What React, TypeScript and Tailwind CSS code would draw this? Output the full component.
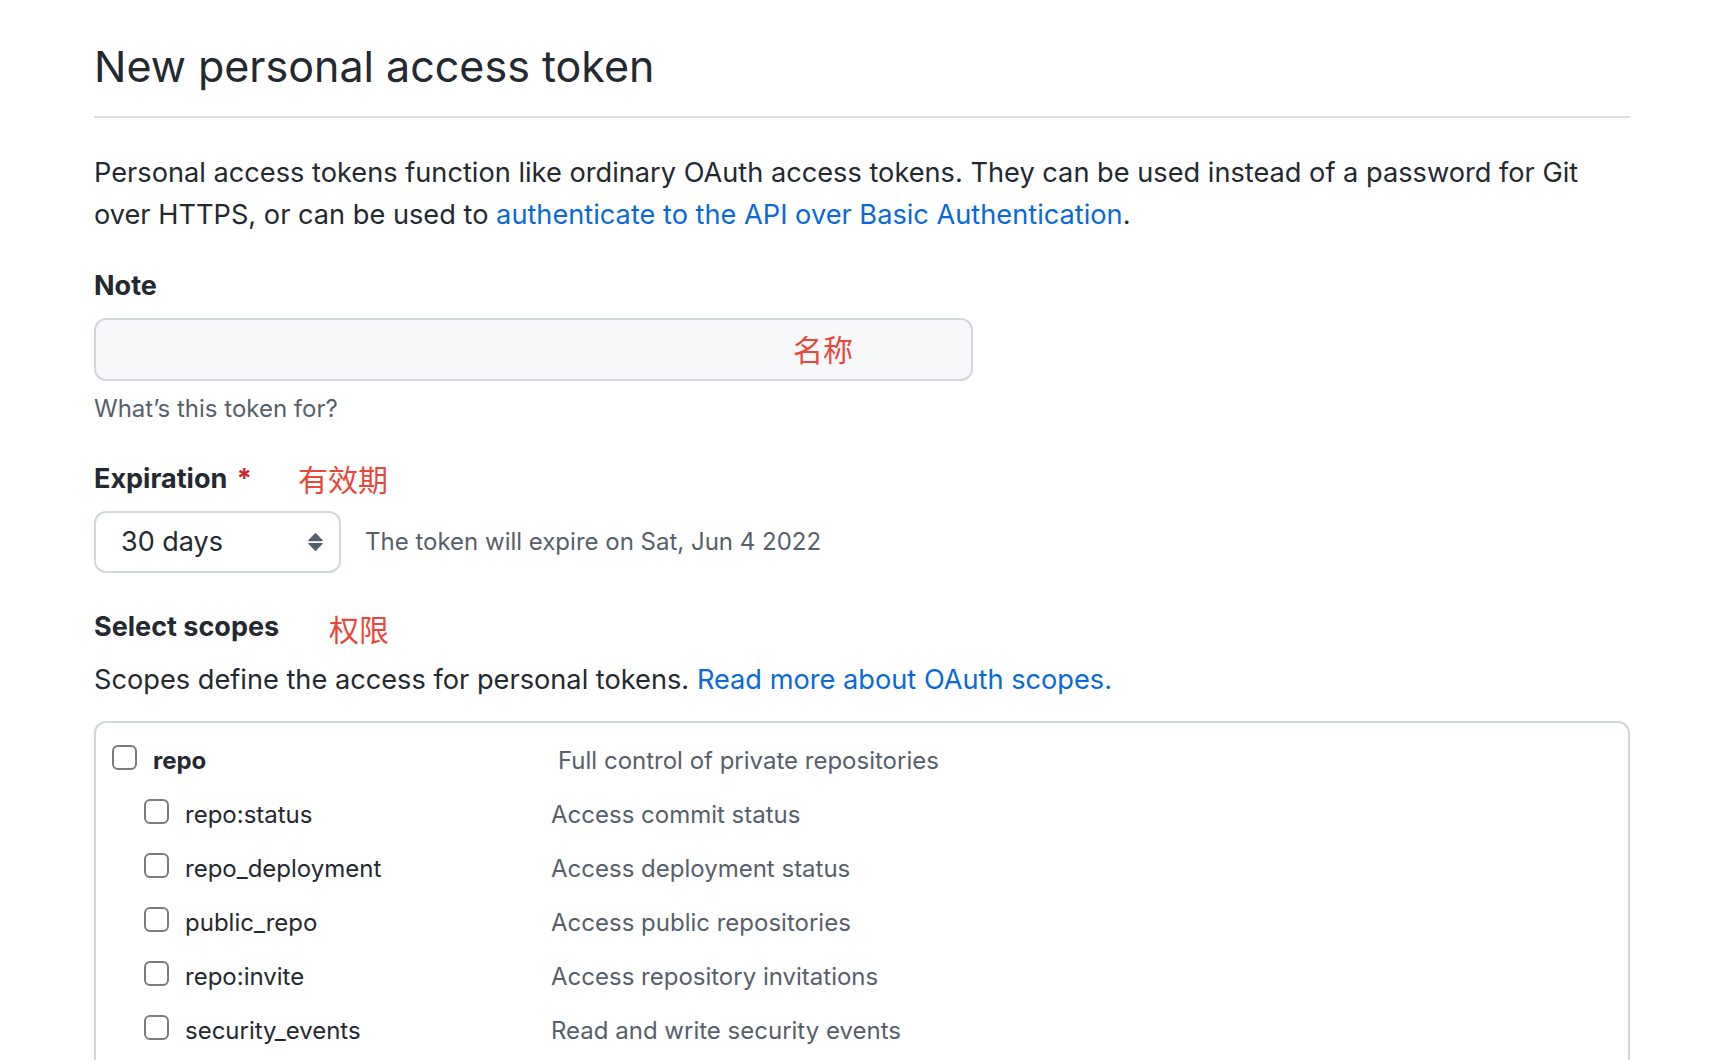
import { type ReactNode } from 'react'

const subScopes = [
  { name: 'repo:status', desc: 'Access commit status' },
  { name: 'repo_deployment', desc: 'Access deployment status' },
  { name: 'public_repo', desc: 'Access public repositories' },
  { name: 'repo:invite', desc: 'Access repository invitations' },
  { name: 'security_events', desc: 'Read and write security events' },
]

function Checkbox() {
  return <span className="mb-[8px] size-[25px] shrink-0 rounded-[6px] border-2 border-[#7b7b7b] bg-white" />
}

function ScopeRow({ name, desc, sub = false }: { name: string; desc: string; sub?: boolean }) {
  return (
    <div className="flex h-[54px] items-center">
      <div className={sub ? 'flex w-[455px] items-center pl-[48px]' : 'flex w-[462px] items-center pl-[16px]'}>
        <Checkbox />
        <span className={`ml-[16px] text-[24px] text-[#24292f] ${sub ? '' : 'font-bold'}`}>{name}</span>
      </div>
      <span className="text-[24px] text-[#57606a]">{desc}</span>
    </div>
  )
}

function Note({ children }: { children: ReactNode }) {
  return <span className="text-[30px] leading-none text-[#e8483b]">{children}</span>
}

export default function App() {
  return (
    <div className="min-h-screen bg-white font-['Inter','Noto_Sans_CJK_SC',sans-serif] text-[#24292f]">
      <main className="ml-[94px] w-[1536px]">
        <h1 className="border-b-2 border-[#d8dee4] pt-[40px] pb-[24px] text-[43px] leading-[52px] font-normal">
          New personal access token
        </h1>

        <p className="mt-[34px] text-[27.2px] leading-[42px]">
          Personal access tokens function like ordinary OAuth access tokens. They can be used instead of a password for Git
          <br />
          over HTTPS, or can be used to{' '}
          <a href="#" className="text-[#0969da]">
            authenticate to the API over Basic Authentication
          </a>
          .
        </p>

        <div className="mt-[32px] h-[36px] text-[27px] leading-[36px] font-bold">Note</div>
        <div className="mt-[14px] flex h-[63px] w-[879px] items-center rounded-[12px] border-2 border-[#d0d7de] bg-[#f6f8fa] pl-[697px]">
          <Note>名称</Note>
        </div>
        <div className="mt-[10px] h-[36px] text-[24px] leading-[36px] text-[#57606a]">What’s this token for?</div>

        <div className="mt-[34px] flex h-[36px] items-center">
          <div className="w-[204px] text-[27px] leading-[36px] font-bold">
            Expiration <span className="ml-[3px] text-[#cf222e]">*</span>
          </div>
          <span className="pt-[3px]">
            <Note>有效期</Note>
          </span>
        </div>

        <div className="mt-[14px] flex items-center">
          <div className="flex h-[62px] w-[247px] items-center justify-between rounded-[12px] border-2 border-[#d0d7de] bg-white pr-[16px] pl-[25px]">
            <span className="text-[27px]">30 days</span>
            <svg width="15" height="18" viewBox="0 0 15 18" fill="#57606a" stroke="#57606a" strokeWidth="1.4" strokeLinejoin="round">
              <path d="M7.5 0.8 L14 7.6 H1 Z" />
              <path d="M1 10.6 H14 L7.5 17.3 Z" />
            </svg>
          </div>
          <span className="ml-[24px] text-[24px] text-[#57606a]">The token will expire on Sat, Jun 4 2022</span>
        </div>

        <div className="mt-[36px] flex h-[36px] items-center">
          <div className="w-[235px] text-[27px] leading-[36px] font-bold">Select scopes</div>
          <span className="pt-[8px]">
            <Note>权限</Note>
          </span>
        </div>

        <p className="mt-[14px] text-[27.2px] leading-[42px]">
          Scopes define the access for personal tokens.{' '}
          <a href="#" className="text-[#0969da]">
            Read more about OAuth scopes.
          </a>
        </p>

        <div className="mt-[20px] rounded-[12px] border-2 border-[#d0d7de] pt-[11px] pb-[40px]">
          <ScopeRow name="repo" desc="Full control of private repositories" />
          {subScopes.map((s) => (
            <ScopeRow key={s.name} name={s.name} desc={s.desc} sub />
          ))}
        </div>
      </main>
    </div>
  )
}
